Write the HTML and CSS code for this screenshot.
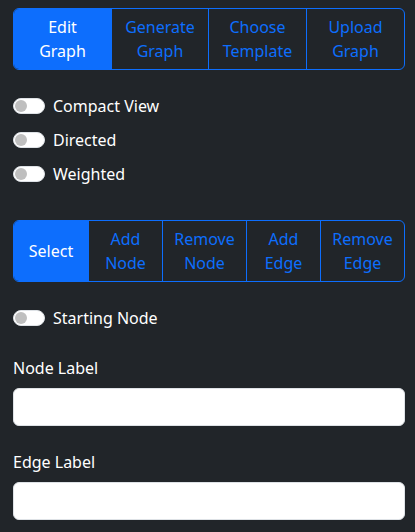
FILE: index.html
```html
<!DOCTYPE html>
<html>
<head>
<meta charset="utf-8">
<link rel="stylesheet" href="styles.css">
</head>
<body>
<div class="panel">
  <div class="btn-group tabs">
    <div class="btn active">Edit<br>Graph</div>
    <div class="btn">Generate<br>Graph</div>
    <div class="btn">Choose<br>Template</div>
    <div class="btn">Upload<br>Graph</div>
  </div>

  <div class="switches">
    <label class="switch-row"><span class="switch"><span class="knob"></span></span>Compact View</label>
    <label class="switch-row"><span class="switch"><span class="knob"></span></span>Directed</label>
    <label class="switch-row"><span class="switch"><span class="knob"></span></span>Weighted</label>
  </div>

  <div class="btn-group tools">
    <div class="btn active">Select</div>
    <div class="btn">Add<br>Node</div>
    <div class="btn">Remove<br>Node</div>
    <div class="btn">Add<br>Edge</div>
    <div class="btn">Remove<br>Edge</div>
  </div>

  <label class="switch-row start"><span class="switch"><span class="knob"></span></span>Starting Node</label>

  <div class="field">
    <label class="field-label">Node Label</label>
    <input class="input" type="text">
  </div>
  <div class="field">
    <label class="field-label">Edge Label</label>
    <input class="input" type="text">
  </div>
</div>
</body>
</html>
```

FILE: styles.css
```css
html, body {
  margin: 0;
  background: #212529;
}
body {
  font-family: "Noto Sans", "Open Sans", sans-serif;
  font-size: 16px;
  line-height: 24px;
  color: #dee2e6;
}
.panel {
  width: 392px;
  padding: 8px 10px 0 13px;
  display: flex;
  flex-direction: column;
}
.btn-group {
  display: grid;
  border: 1px solid #0d6efd;
  border-radius: 6px;
  overflow: hidden;
  height: 62px;
  box-sizing: border-box;
}
.tabs {
  grid-template-columns: 97px 97px 98px 1fr;
}
.tools {
  grid-template-columns: 74px 74px 84px 74px 1fr;
  margin-top: 34px;
}
.btn {
  display: flex;
  align-items: center;
  justify-content: center;
  line-height: 24px;
  color: #0d6efd;
  border-left: 1px solid #0d6efd;
  padding: 0 2px;
  text-align: center;
}
.btn:first-child {
  border-left: 0;
}
.btn.active {
  background: #0d6efd;
  color: #fff;
}
.switches {
  display: flex;
  flex-direction: column;
  gap: 10px;
  margin-top: 24px;
}
.switch-row {
  display: flex;
  align-items: center;
  gap: 8px;
  height: 24px;
  color: #fff;
}
.switch {
  width: 32px;
  height: 16px;
  box-sizing: border-box;
  border-radius: 8px;
  background: #fff;
  border: 1px solid #dee2e6;
  display: flex;
  align-items: center;
  padding-left: 1px;
}
.knob {
  width: 12px;
  height: 12px;
  border-radius: 50%;
  background: #bfbfbf;
}
.start {
  margin-top: 24px;
}
.field {
  display: flex;
  flex-direction: column;
  margin-top: 26px;
}
.field + .field {
  margin-top: 24px;
}
.field-label {
  color: #fff;
  margin-bottom: 8px;
}
.input {
  height: 38px;
  box-sizing: border-box;
  border: 1px solid #dee2e6;
  border-radius: 6px;
  background: #fff;
  margin: 0;
  font: inherit;
}
```
